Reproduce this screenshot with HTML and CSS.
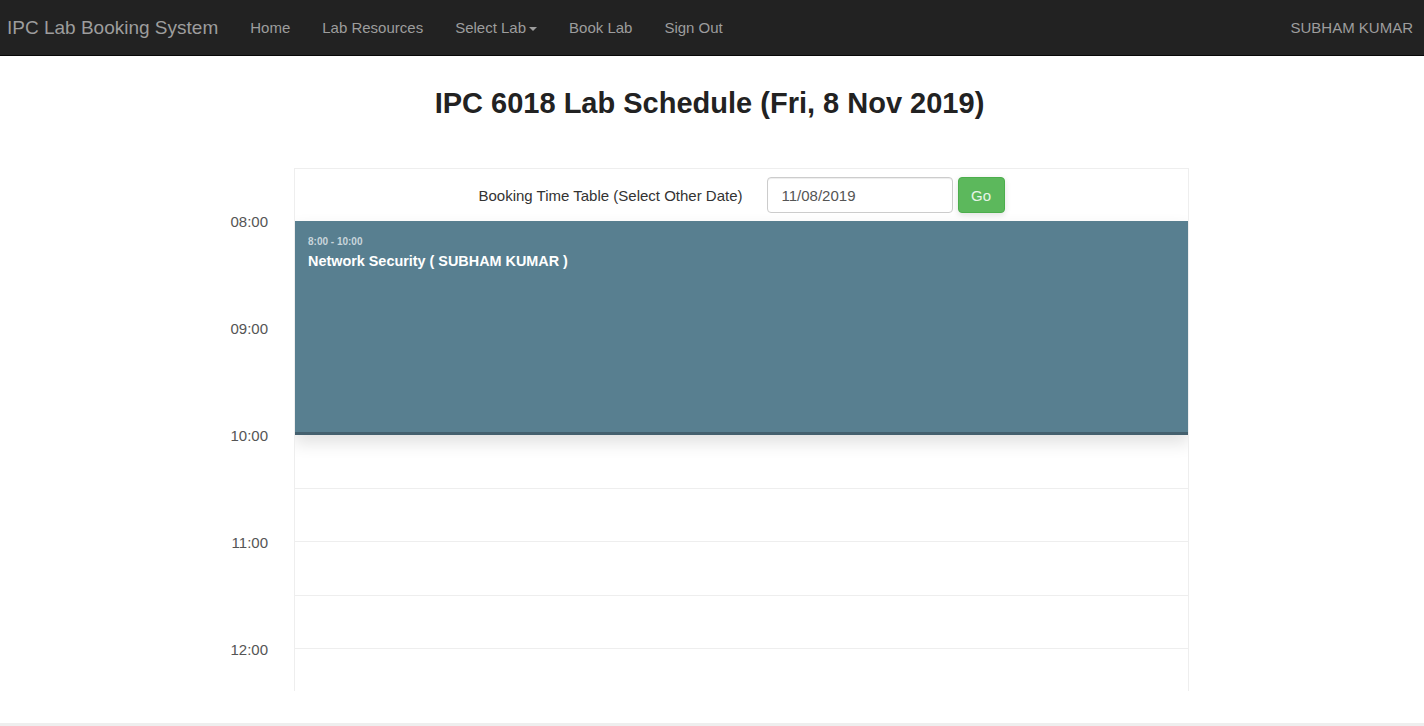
FILE: index.html
```html
<!DOCTYPE html>
<html lang="en">
<head>
<meta charset="utf-8">
<title>IPC Lab Booking System</title>
<link rel="stylesheet" href="styles.css">
</head>
<body>
<nav class="navbar">
  <a class="brand" href="#">IPC Lab Booking System</a>
  <ul class="nav">
    <li><a href="#">Home</a></li>
    <li><a href="#">Lab Resources</a></li>
    <li><a href="#">Select Lab<span class="caret"></span></a></li>
    <li><a href="#">Book Lab</a></li>
    <li><a href="#">Sign Out</a></li>
  </ul>
  <div class="user">SUBHAM KUMAR</div>
</nav>

<h2 class="title">IPC 6018 Lab Schedule (Fri, 8 Nov 2019)</h2>

<section class="schedule">
  <div class="times">
    <div class="time">08:00</div>
    <div class="time">09:00</div>
    <div class="time">10:00</div>
    <div class="time">11:00</div>
    <div class="time">12:00</div>
  </div>
  <div class="board">
    <div class="board-head">
      <span class="head-label">Booking Time Table (Select Other Date)</span>
      <input class="date-input" type="text" value="11/08/2019">
      <button class="go-btn">Go</button>
    </div>
    <div class="slots">
      <div class="slot"></div>
      <div class="slot"></div>
      <div class="slot"></div>
      <div class="slot"></div>
      <div class="slot"></div>
      <div class="slot"></div>
      <div class="slot"></div>
      <div class="slot"></div>
      <div class="slot"></div>
      <div class="event">
        <div class="event-time">8:00 - 10:00</div>
        <div class="event-title">Network Security ( SUBHAM KUMAR )</div>
      </div>
    </div>
  </div>
</section>

<footer class="footer"></footer>
</body>
</html>
```

FILE: styles.css
```css
html, body {
  margin: 0;
  padding: 0;
  height: 726px;
  overflow: hidden;
  background: #fff;
  font-family: "Liberation Sans", Arial, sans-serif;
  font-size: 15px;
  color: #333;
}

.navbar {
  display: flex;
  align-items: center;
  height: 55px;
  background: #222;
  border-bottom: 1px solid #080808;
}

.brand {
  font-size: 19px;
  color: #9d9d9d;
  text-decoration: none;
  padding: 0 16px 0 7px;
}

.nav {
  display: flex;
  list-style: none;
  margin: 0;
  padding: 0;
  flex: 1;
}

.nav a {
  display: block;
  padding: 0 16px;
  color: #9d9d9d;
  text-decoration: none;
  font-size: 15px;
}

.caret {
  display: inline-block;
  width: 0;
  height: 0;
  margin-left: 3px;
  vertical-align: middle;
  border-top: 4px solid #9d9d9d;
  border-left: 4px solid transparent;
  border-right: 4px solid transparent;
}

.user {
  color: #9d9d9d;
  font-size: 15px;
  padding-right: 11px;
}

.title {
  margin: 32px 0 0;
  padding-right: 5px;
  text-align: center;
  font-size: 29px;
  line-height: 31px;
  font-weight: bold;
  color: #222;
}

.schedule {
  display: flex;
  margin: 49px 0 0 218px;
  width: 971px;
  height: 523px;
}

.times {
  width: 76px;
  overflow: hidden;
}

.time {
  height: 107px;
  display: flex;
  align-items: center;
  justify-content: flex-end;
  padding-right: 26px;
  color: #555;
  font-size: 15px;
}

.board {
  flex: 1;
  border: 1px solid #eee;
  border-bottom: none;
  overflow: hidden;
}

.board-head {
  height: 52px;
  display: flex;
  align-items: center;
  justify-content: center;
  padding-left: 0;
}

.head-label {
  color: #333;
  margin-right: 24px;
}

.date-input {
  width: 186px;
  height: 36px;
  box-sizing: border-box;
  border: 1px solid #ccc;
  border-radius: 4px;
  padding: 6px 14px;
  font-family: inherit;
  font-size: 15px;
  color: #555;
  box-shadow: inset 0 1px 1px rgba(0,0,0,.075);
}

.go-btn {
  margin-left: 5px;
  width: 47px;
  height: 36px;
  border: 1px solid #4cae4c;
  border-radius: 4px;
  background: #5cb85c;
  color: #e8f5e8;
  font-family: inherit;
  font-size: 15px;
  box-shadow: 0 2px 6px rgba(0,0,0,.12);
}

.slots {
  position: relative;
}

.slot {
  height: 53.5px;
  box-sizing: border-box;
  border-bottom: 1px solid #eee;
}

.event {
  position: absolute;
  top: 0;
  left: -1px;
  right: -1px;
  height: 214px;
  box-sizing: border-box;
  background: #587f90;
  border-bottom: 3px solid #44606e;
  padding: 15px 14px 14px;
  box-shadow: 0 8px 16px rgba(0,0,0,.12);
}

.event-time {
  font-size: 10px;
  font-weight: bold;
  color: #c9d6dc;
  line-height: 12px;
}

.event-title {
  margin-top: 5px;
  font-size: 14.4px;
  font-weight: bold;
  color: #fff;
}

.footer {
  margin-top: 32px;
  border-top: 4px solid #eee;
}
```
